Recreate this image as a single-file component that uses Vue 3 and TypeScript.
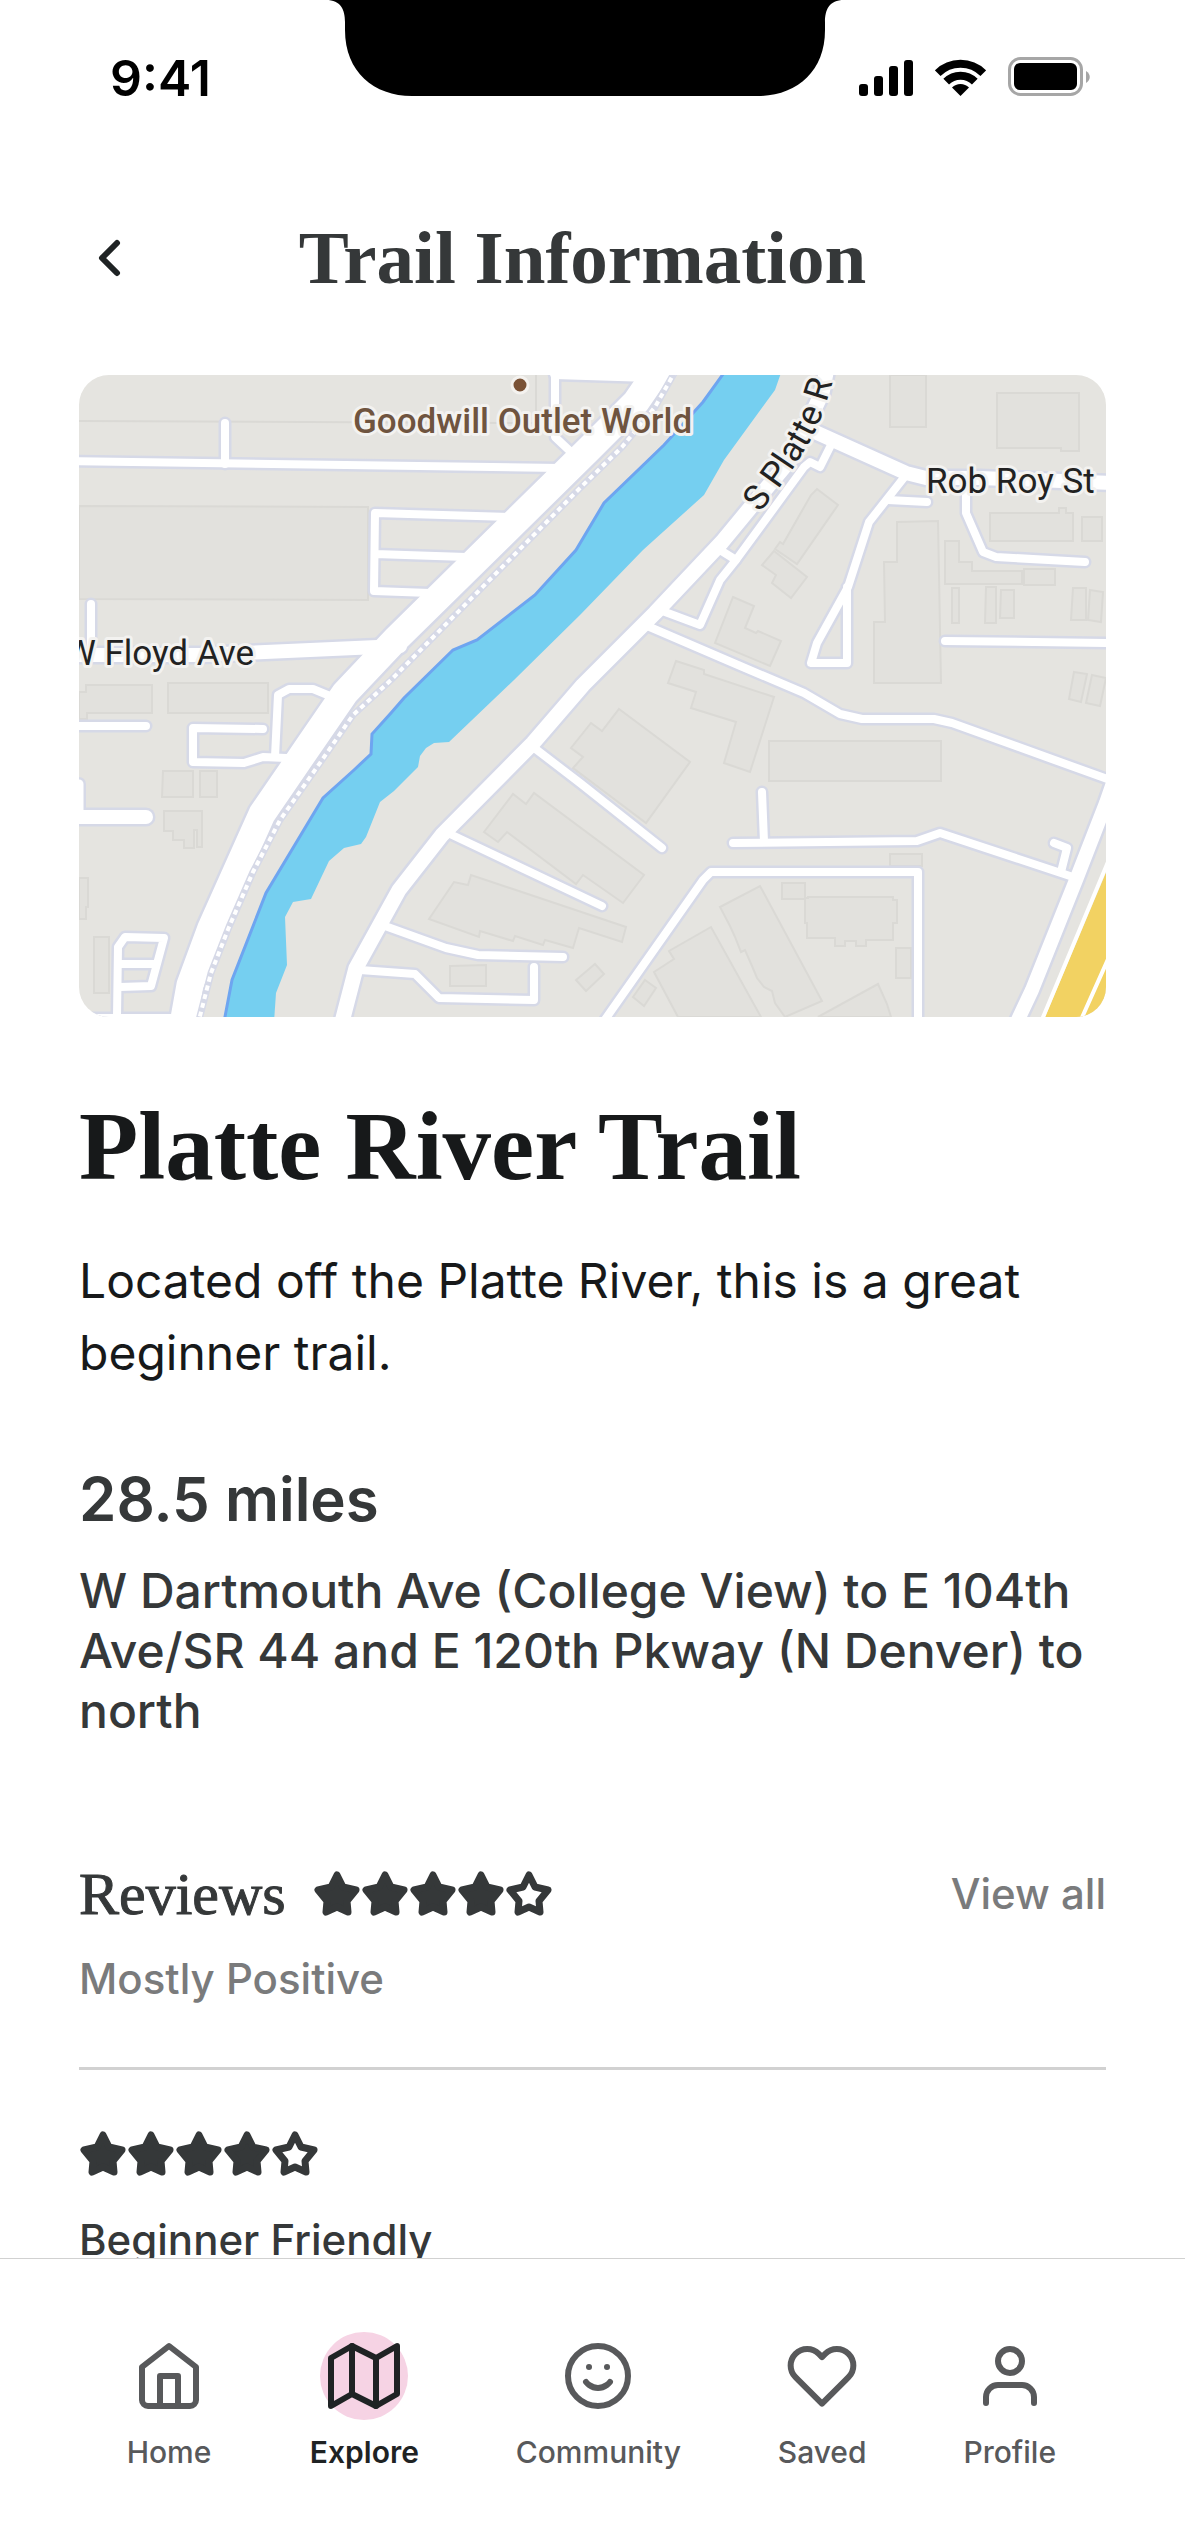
<script setup lang="ts">
interface Road {
  d: string
  w: number
}

interface Tab {
  label: string
  shapes: string[]
  active?: boolean
}

const buildings: string[] = [
  'M79 421L536 423M536 375V423',
  'M79 506L368 507V600L79 599Z',
  'M86 685H152V713H87V719H79V692H86Z',
  'M168 683H268V713H168Z',
  'M163 771H193V797H162Z',
  'M200 771H217V797H200Z',
  'M164 811H202V847H197V830H194V848H184V840H173V831H164Z',
  'M79 878H88V907H86V919H79Z',
  'M94 937H109V993H94Z',
  'M450 966L486 965V986H450Z',
  'M484 832L513 794L526 804L534 793L644 875L623 903L583 875L576 884L507 832L498 842Z',
  'M429 919L454 882L468 885L471 875L626 927L622 942L579 928L573 948L545 940L543 945L515 936L513 941L480 931L479 937Z',
  'M619 709L690 762L646 823L573 768L583 757L571 748L591 723L602 731Z',
  'M676 661L704 670V674L774 697L750 772L724 763L736 722L691 708L696 692L668 683Z',
  'M769 741H941V781H769Z',
  'M890 854H922V866H890Z',
  'M782 883H805V899H782Z',
  'M805 898H808V897H893V900H897V923H893V940H866V946H856V941H845V946H835V938H807V923H805Z',
  'M896 948H911V978H896Z',
  'M720 907L760 886L822 1001L785 1017L775 1003L772 991L764 987L757 978L752 966L745 950L741 952L735 937L730 926Z',
  'M711 927L669 951L674 959L654 972L678 1017H761Z',
  'M878 984L818 1017H891L887 1004Z',
  'M645 980L656 988L644 1006L633 997Z',
  'M595 964L604 974L586 991L576 980Z',
  'M890 375H926V427H890Z',
  'M997 393H1079V451H1061V448H997Z',
  'M990 513H1059V508H1066V513H1073V541H990Z',
  'M1082 517H1102V541H1082Z',
  'M897 522L938 521L941 683H874V622H885L884 562H897Z',
  'M945 541H959V562H972V571H1022V584H945Z',
  'M1024 569H1055V585H1024Z',
  'M952 588H959V623H952Z',
  'M986 587H996V623H985Z',
  'M1001 590H1014V618H1000Z',
  'M1073 588H1086V620H1071Z',
  'M1090 590L1103 592L1101 622L1088 620Z',
  'M1074 672L1087 674L1081 702L1069 699Z',
  'M1092 675L1106 678L1100 706L1086 703Z',
  'M817 489L838 505L797 564L775 549L780 542L783 544L811 495Z',
  'M774 551L807 577L791 598L772 583L776 575L762 565Z',
  'M733 597L754 606L745 628L756 633L758 631L781 641L770 666L715 643Z',
]

const roads: Road[] = [
  { d: 'M70 461L560 468', w: 8 },
  { d: 'M225 423V464', w: 8 },
  { d: 'M510 517L375 513L374 591L430 593M375 554L466 557', w: 8 },
  { d: 'M555 365V437L572 453', w: 8 },
  { d: 'M555 374L650 377', w: 10 },
  { d: 'M70 655H200L400 646', w: 14 },
  { d: 'M91 604V650', w: 8 },
  { d: 'M330 696L313 689H289L278 695L275 757', w: 8 },
  { d: 'M286 758L263 757L244 763L193 762V728L263 729', w: 8 },
  { d: 'M70 726H146', w: 8 },
  { d: 'M70 817H146', w: 14 },
  { d: 'M79 784V817', w: 9 },
  { d: 'M117 1016L118 947L125 937L164 938L151 986L120 987M120 964H156', w: 8 },
  { d: 'M79 1018H185', w: 8 },
  { d: 'M815 432L906 473L926 478H980L1115 483', w: 14 },
  { d: 'M832 443L820 467L810 462L804 467L736 560L720 580L700 625L657 609', w: 8 },
  { d: 'M720 550L736 560', w: 8 },
  { d: 'M645 625L738 665L804 693L840 714L862 719H934L952 723L1110 780', w: 8 },
  { d: 'M906 475L869 522L848 587L817 643L811 663H847V587', w: 8 },
  { d: 'M888 500L927 502', w: 8 },
  { d: 'M966 490V513L983 552L996 557L1085 562', w: 8 },
  { d: 'M945 641L1115 643', w: 8 },
  { d: 'M533 747L580 783L662 848', w: 8 },
  { d: 'M450 834L602 906', w: 8 },
  { d: 'M762 792L764 842', w: 8 },
  { d: 'M733 843L917 841L940 833L1073 877', w: 8 },
  { d: 'M1054 843L1067 848L1061 872', w: 8 },
  { d: 'M604 1021L703 880L711 872H918V1025', w: 8 },
  { d: 'M385 926L446 948L478 955L563 957', w: 8 },
  { d: 'M360 970L415 974L439 998L534 1000V967', w: 8 },
  { d: 'M1128 740L1106 803L1076 880L1032 990L1016 1024', w: 14 },
  { d: 'M827 368L822 393L790 460L755 502L722 542L655 613L583 685L533 743L442 835L399 890L356 968L342 1022', w: 15 },
  { d: 'M658 370L636 402L588 450L397 638L345 693L312 741L262 814L211 928L190 985L183 1024', w: 27 },
]

const rail =
  'M676 370L655 407L622 447L580 488L391 680L353 715L322 760L280 820L253 872L229 927L211 973L199 1020'

const riverBank =
  'M726 370L703 402L664 445L604 503L576 550L535 595L477 640L453 650L404 698L391 713L372 734L371 754L354 770L323 798L266 893L232 980L224 1022'

const river =
  riverBank +
  'L274 1022L276 993L287 965L285 917L293 902L311 899L329 861L344 848L361 844L366 837L380 802L394 791L418 767L420 756L426 748L434 743L449 742L514 680L580 615L643 550L704 495L724 460L775 390L782 370Z'

const tabs: Tab[] = [
  { label: 'Home', shapes: ['M3 9l9-7 9 7v11a2 2 0 0 1-2 2H5a2 2 0 0 1-2-2z', 'M9 22V12h6v10'] },
  { label: 'Explore', active: true, shapes: ['M1 6v16l7-4 8 4 7-4V2l-7 4-8-4-7 4z', 'M8 2v16', 'M16 6v16'] },
  {
    label: 'Community',
    shapes: ['M2 12a10 10 0 1 0 20 0a10 10 0 1 0-20 0', 'M8 14s1.5 2 4 2 4-2 4-2', 'M9 9h.01', 'M15 9h.01'],
  },
  {
    label: 'Saved',
    shapes: [
      'M20.84 4.61a5.5 5.5 0 0 0-7.78 0L12 5.67l-1.06-1.06a5.5 5.5 0 0 0-7.78 7.78l1.06 1.06L12 21.23l7.78-7.78 1.06-1.06a5.5 5.5 0 0 0 0-7.78z',
    ],
  },
  { label: 'Profile', shapes: ['M20 21v-2a4 4 0 0 0-4-4H8a4 4 0 0 0-4 4v2', 'M8 7a4 4 0 1 0 8 0a4 4 0 1 0-8 0'] },
]

const rating = 4
const star = 'M24 5L30 17L43 20L34 31L35 42L24 37L13 42L14 31L5 20L18 17Z'
</script>

<template>
  <div class="screen">
    <div class="status">
      <span class="time">9:41</span>
      <svg class="notch" viewBox="0 0 518 96" aria-hidden="true">
        <path d="M0 0C15 0 19 10 19 22V30C19 72 48 96 86 96H432C470 96 499 72 499 30V22C499 10 503 0 518 0Z" />
      </svg>
      <div class="indicators">
        <svg width="54" height="39" viewBox="0 0 54 39" aria-hidden="true">
          <rect x="0" y="27" width="9" height="12" rx="3" />
          <rect x="15" y="19" width="9" height="20" rx="3" />
          <rect x="30" y="9" width="9" height="30" rx="3" />
          <rect x="45" y="3" width="9" height="36" rx="3" />
        </svg>
        <svg width="51" height="39" viewBox="0 -3 51 39" aria-hidden="true">
          <path d="M2.7 13.2A32.2 32.2 0 0 1 48.3 13.2M11.2 21.7A20.2 20.2 0 0 1 39.8 21.7" fill="none" stroke="#000" stroke-width="8" />
          <path d="M25.5 36L17 27.5A12 12 0 0 1 34 27.5Z" />
        </svg>
        <svg width="82" height="39" viewBox="0 0 82 39" aria-hidden="true">
          <rect x="1.5" y="1.5" width="72" height="36" rx="11" fill="none" stroke="#a6a6a6" stroke-width="3" />
          <rect x="6" y="6" width="63" height="27" rx="6" />
          <path d="M78 14C83 17 83 23 78 26Z" fill="#a6a6a6" />
        </svg>
      </div>
    </div>

    <header class="header">
      <button class="back" type="button" aria-label="Back">
        <svg width="60" height="60" viewBox="0 0 60 60" aria-hidden="true">
          <path d="M38 15L23 30L38 45" />
        </svg>
      </button>
      <h1>Trail Information</h1>
    </header>

    <main class="content">
      <svg class="map" viewBox="79 375 1027 642" role="img" aria-label="Map of the Platte River Trail">
        <rect class="land" x="79" y="375" width="1027" height="642" />
        <path v-for="b in buildings" :key="b" class="building" :d="b" />
        <path class="river" :d="river" />
        <path class="bank" :d="riverBank" />
        <path v-for="r in roads" :key="'c' + r.d" class="casing" :d="r.d" :stroke-width="r.w + 5" />
        <path v-for="r in roads" :key="r.d" class="road" :d="r.d" :stroke-width="r.w" />
        <path class="rail-bed" :d="rail" />
        <path class="rail" :d="rail" />
        <path class="highway" d="M1110 863L1043 1022H1110Z" />
        <path class="highway-edge" d="M1110 857L1041 1022M1109 957L1080 1022" />
        <circle class="poi" cx="520" cy="385" r="8" />
        <text class="place" x="353" y="433">Goodwill Outlet World</text>
        <text class="street" x="254" y="665" text-anchor="end">W Floyd Ave</text>
        <text class="street" x="926" y="493">Rob Roy St</text>
        <path id="platte-line" d="M760 513L782 484Q814 440 824 410L846 340" fill="none" />
        <text class="street"><textPath href="#platte-line">S Platte R</textPath></text>
      </svg>

      <h2>Platte River Trail</h2>
      <p class="summary">Located off the Platte River, this is a great beginner trail.</p>
      <h3 class="distance">28.5 miles</h3>
      <p class="route">W Dartmouth Ave (College View) to E 104th Ave/SR 44 and E 120th Pkway (N Denver) to north</p>

      <section class="reviews">
        <div class="reviews-head">
          <h3>Reviews</h3>
          <div class="stars" role="img" aria-label="4 out of 5 stars">
            <svg v-for="n in 5" :key="n" :class="{ empty: n > rating }" viewBox="0 0 48 48"><path :d="star" /></svg>
          </div>
          <a href="#reviews">View all</a>
        </div>
        <p class="verdict">Mostly Positive</p>
        <hr />
        <article>
          <div class="stars" role="img" aria-label="4 out of 5 stars">
            <svg v-for="n in 5" :key="n" :class="{ empty: n > rating }" viewBox="0 0 48 48"><path :d="star" /></svg>
          </div>
          <p class="review-title">Beginner Friendly</p>
        </article>
      </section>
    </main>

    <nav class="tabs">
      <a v-for="t in tabs" :key="t.label" :href="'#' + t.label.toLowerCase()" :class="{ active: t.active }">
        <span class="icon">
          <svg viewBox="0 0 24 24" aria-hidden="true"><path v-for="s in t.shapes" :key="s" :d="s" /></svg>
        </span>
        <span>{{ t.label }}</span>
      </a>
    </nav>
  </div>
</template>

<style>
body {
  margin: 0;
  background: #fff;
}
</style>

<style scoped>
.screen {
  display: flex;
  flex-direction: column;
  height: 100vh;
  font-family: Inter, "Liberation Sans", sans-serif;
  color: #353839;
}
h1,
h2,
h3,
p {
  margin: 0;
}
a {
  color: inherit;
  text-decoration: none;
}
.status {
  display: grid;
  grid-template-columns: 326fr 518fr 341fr;
  align-items: start;
}
.time {
  padding: 48px 0 0 110px;
  font-size: 50px;
  line-height: 60px;
  font-weight: 600;
  color: #000;
}
.notch {
  display: block;
  width: 100%;
}
.indicators {
  display: flex;
  justify-content: flex-end;
  gap: 22px;
  padding: 57px 95px 0 0;
}
.indicators svg {
  display: block;
}
.header {
  display: grid;
  grid-template-columns: 60px 1fr 80px;
  align-items: center;
  padding: 105px 79px 72px;
}
.back {
  padding: 0;
  border: 0;
  background: none;
  height: 60px;
}
.back svg {
  display: block;
  fill: none;
  stroke: #1f2324;
  stroke-width: 6;
  stroke-linecap: round;
  stroke-linejoin: round;
}
h1 {
  font: 700 75px/90px "Liberation Serif", serif;
  text-align: center;
}
.content {
  flex: 1;
  min-height: 0;
  overflow-y: auto;
  scrollbar-width: none;
  padding: 0 79px;
}
.map {
  display: block;
  width: 100%;
  border-radius: 30px;
}
.land {
  fill: #e5e4e0;
}
.building {
  fill: #e2e1dd;
  stroke: #dad9d5;
  stroke-width: 2;
}
.river {
  fill: #75cff0;
}
.bank {
  fill: none;
  stroke: #6ea5f0;
  stroke-width: 3;
}
.casing,
.road,
.rail,
.rail-bed {
  fill: none;
  stroke: #d6d9e7;
  stroke-linejoin: round;
  stroke-linecap: round;
}
.road {
  stroke: #fff;
}
.rail-bed {
  stroke-width: 7;
}
.rail {
  stroke: #fff;
  stroke-width: 4;
  stroke-linecap: butt;
  stroke-dasharray: 5 4;
}
.highway {
  fill: #f2d262;
}
.highway-edge {
  fill: none;
  stroke: #fff;
  stroke-width: 4;
}
.poi {
  fill: #7a5236;
  stroke: #f4f2ef;
  stroke-width: 3;
}
.place,
.street {
  font: 400 35px Roboto, sans-serif;
  fill: #222;
  stroke: #f3f2f0;
  stroke-width: 6;
  stroke-linejoin: round;
  paint-order: stroke;
}
.place {
  font-weight: 500;
  fill: #6f543f;
}
h2 {
  margin-top: 70px;
  font: 700 97px/120px "Liberation Serif", serif;
  color: #17191a;
}
.summary {
  margin-top: 38px;
  font-size: 48px;
  line-height: 72px;
  color: #17191a;
}
.distance {
  margin-top: 74px;
  font-size: 60px;
  line-height: 72px;
  font-weight: 600;
}
.route {
  margin-top: 26px;
  font-size: 48px;
  line-height: 60px;
  font-weight: 500;
}
.reviews {
  margin-top: 120px;
  font-size: 42px;
  line-height: 48px;
  font-weight: 500;
}
.reviews-head {
  display: flex;
  align-items: center;
  gap: 27px;
}
.reviews-head h3 {
  font: 400 60px/66px "Liberation Serif", serif;
  -webkit-text-stroke: 1px currentColor;
}
.reviews-head a {
  margin-left: auto;
  color: #7a7b7c;
}
.stars {
  display: flex;
}
.stars svg {
  display: block;
  width: 48px;
  height: 48px;
  fill: #353839;
  stroke: #353839;
  stroke-width: 7;
  stroke-linejoin: round;
}
.stars .empty {
  fill: none;
}
.verdict {
  margin-top: 28px;
  color: #7a7b7c;
}
hr {
  margin: 64px 0 60px;
  border: 0;
  height: 3px;
  background: #d1d1d1;
}
.review-title {
  margin-top: 38px;
}
.tabs {
  display: flex;
  justify-content: space-between;
  padding: 81px 129px 62px 125px;
  border-top: 1px solid #d1d1d1;
  background: #fff;
  color: #58595b;
  font-size: 30px;
  line-height: 36px;
  font-weight: 500;
}
.tabs a {
  display: flex;
  flex-direction: column;
  align-items: center;
  gap: 22px;
}
.tabs .active {
  color: #1f2324;
  font-weight: 600;
}
.icon {
  display: grid;
  place-items: center;
  width: 88px;
  height: 88px;
  margin: -8px 0;
  border-radius: 50%;
}
.active .icon {
  background: #f6d3e4;
}
.icon svg {
  width: 72px;
  height: 72px;
  fill: none;
  stroke: currentColor;
  stroke-width: 2;
  stroke-linecap: round;
  stroke-linejoin: round;
}
</style>
